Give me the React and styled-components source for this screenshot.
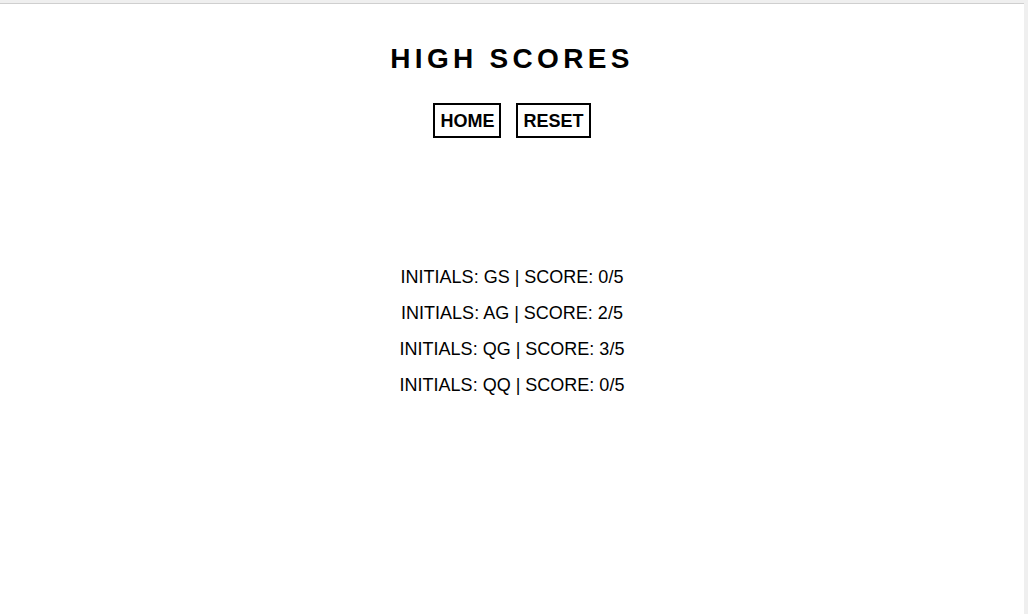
import styled, { createGlobalStyle } from 'styled-components';

const GlobalStyle = createGlobalStyle`
  html, body {
    margin: 0;
    background: #efefef;
    font-family: "Liberation Sans", Arial, sans-serif;
    color: #000;
  }
`;

// styles
const Page = styled.div`
  margin: 3px 4px 0 0;
  border-top: 1px solid #cfcfcf;
  background: #fff;
  min-height: 610px;
  display: flex;
  flex-direction: column;
  align-items: center;
`;

const Title = styled.h1`
  margin: 38px 0 0;
  font-size: 28px;
  font-weight: bold;
  letter-spacing: 4.3px;
  line-height: 34px;
`;

const Buttons = styled.div`
  display: flex;
  gap: 15px;
  margin-top: 27px;
`;

const Button = styled.button`
  font-family: inherit;
  font-size: 18px;
  font-weight: bold;
  color: #000;
  background: #fff;
  border: 2px solid #000;
  padding: 2px 5px 0;
  height: 35px;
  cursor: pointer;
`;

const List = styled.ul`
  list-style: none;
  margin: 129px 0 0;
  padding: 0;
  display: flex;
  flex-direction: column;
  align-items: center;
  gap: 15px;
`;

const Item = styled.li`
  font-size: 18px;
  line-height: 21px;
`;

const scores = [
  { initials: 'GS', score: 0 },
  { initials: 'AG', score: 2 },
  { initials: 'QG', score: 3 },
  { initials: 'QQ', score: 0 },
];

function App() {
  return (
    <>
      <GlobalStyle />
      <Page>
        <Title>HIGH SCORES</Title>
        <Buttons>
          <Button>HOME</Button>
          <Button>RESET</Button>
        </Buttons>
        <List>
          {scores.map((s, i) => (
            <Item key={i}>INITIALS: {s.initials} | SCORE: {s.score}/5</Item>
          ))}
        </List>
      </Page>
    </>
  );
}

export default App;
